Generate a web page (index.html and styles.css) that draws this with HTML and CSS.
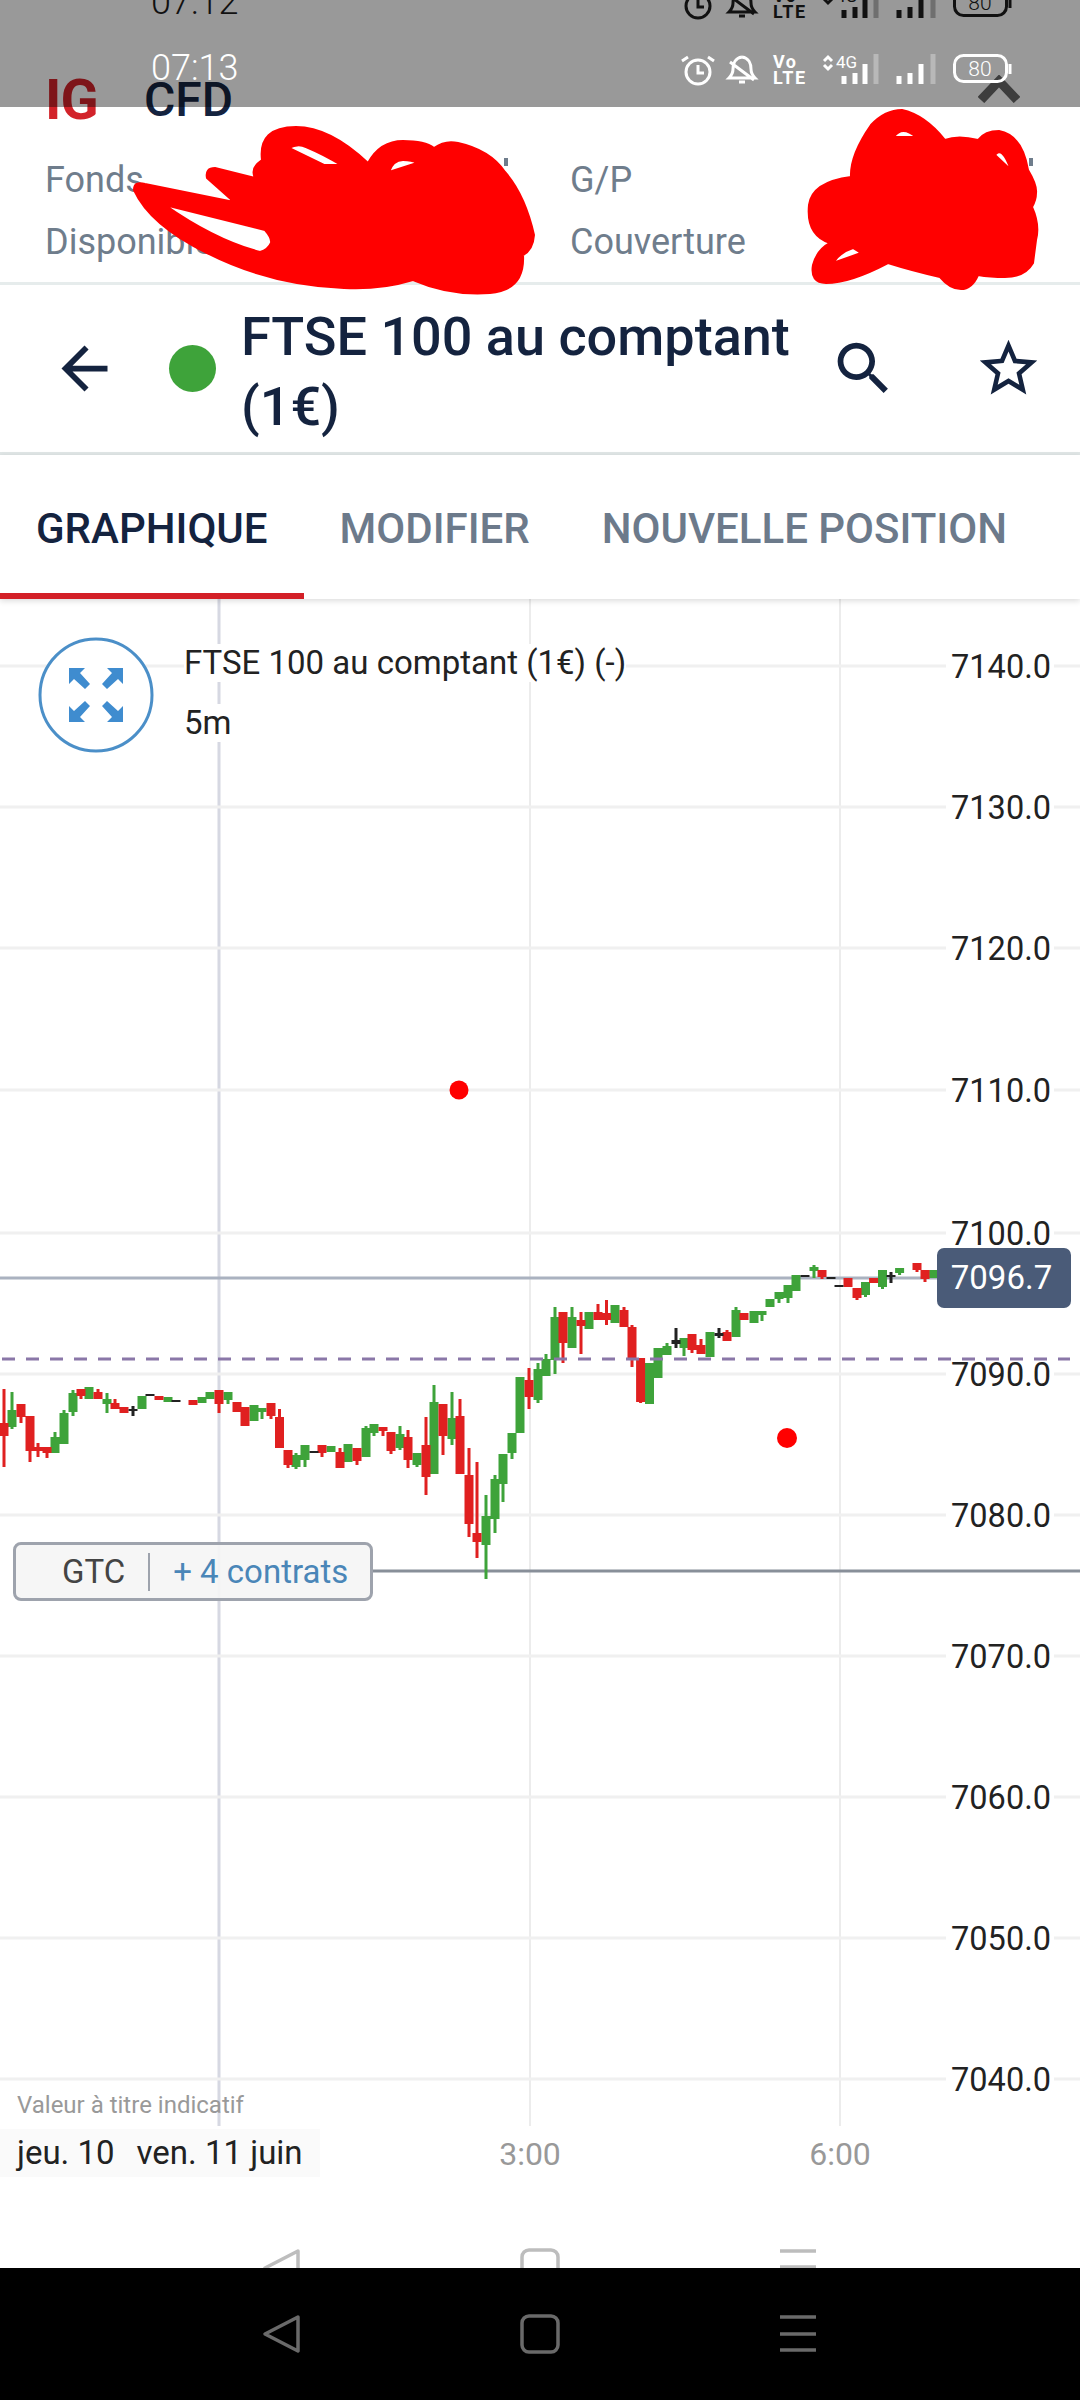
FILE: index.html
```html
<!DOCTYPE html>
<html lang="fr">
<head>
    <meta charset="UTF-8">
    <meta name="viewport" content="width=device-width, initial-scale=1.0">
    <title>IG CFD - FTSE 100 au comptant</title>
    <link rel="stylesheet" href="styles.css">
</head>
<body>
    <div class="app">
        <header class="top-bar">
            <span class="logo">IG</span>
            <span class="brand">CFD</span>
            <svg class="chevron" viewBox="0 0 42 28"><path d="M3 25 21 6l18 19"/></svg>
        </header>

        <section class="account">
            <span>Fonds</span>
            <span>G/P</span>
            <span>Disponible</span>
            <span>Couverture</span>
        </section>

        <section class="instrument">
            <svg class="icon" viewBox="0 0 24 24"><path d="M20 11H7.83l5.59-5.59L12 4l-8 8 8 8 1.41-1.41L7.83 13H20v-2z"/></svg>
            <span class="status-dot"></span>
            <h1 class="instrument-name">FTSE 100 au comptant (1€)</h1>
            <svg class="icon" viewBox="0 0 24 24"><path d="M15.5 14h-.79l-.28-.27C15.41 12.59 16 11.11 16 9.5 16 5.91 13.09 3 9.5 3S3 5.91 3 9.5 5.91 16 9.5 16c1.61 0 3.09-.59 4.23-1.57l.27.28v.79l5 4.99L20.49 19l-4.99-5zm-6 0C7.01 14 5 11.99 5 9.5S7.01 5 9.5 5 14 7.01 14 9.5 11.99 14 9.5 14z"/></svg>
            <svg class="icon star" viewBox="0 0 24 24"><path d="M22 9.24l-7.19-.62L12 2 9.19 8.63 2 9.24l5.46 4.73L5.82 21 12 17.27 18.18 21l-1.63-7.03L22 9.24zM12 15.4l-3.76 2.27 1-4.28-3.32-2.88 4.38-.38L12 6.1l1.71 4.04 4.38.38-3.32 2.88 1 4.28L12 15.4z"/></svg>
        </section>

        <nav class="tabs">
            <a class="tab active">GRAPHIQUE</a>
            <a class="tab">MODIFIER</a>
            <a class="tab">NOUVELLE POSITION</a>
        </nav>

        <main class="chart">
            <!-- viewBox uses screen coordinates, so y values read straight off the screenshot -->
            <svg class="chart-canvas" viewBox="0 599 1080 1669">
                <path class="grid-v" d="M530 599V2126M840 599V2126"/>
                <path class="grid-v-cursor" d="M219 599V2126"/>
                <path class="grid-h" d="M0 666H946M1054 666H1080M0 807H946M1054 807H1080M0 948H946M1054 948H1080M0 1090H946M1054 1090H1080M0 1233H946M1054 1233H1080M0 1374H946M1054 1374H1080M0 1515H946M1054 1515H1080M0 1656H946M1054 1656H1080M0 1797H946M1054 1797H1080M0 1938H946M1054 1938H1080M0 2079H946M1054 2079H1080"/>

                <text class="price" x="1051" y="667">7140.0</text>
                <text class="price" x="1051" y="808">7130.0</text>
                <text class="price" x="1051" y="949">7120.0</text>
                <text class="price" x="1051" y="1091">7110.0</text>
                <text class="price" x="1051" y="1234">7100.0</text>
                <text class="price" x="1051" y="1375">7090.0</text>
                <text class="price" x="1051" y="1516">7080.0</text>
                <text class="price" x="1051" y="1657">7070.0</text>
                <text class="price" x="1051" y="1798">7060.0</text>
                <text class="price" x="1051" y="1939">7050.0</text>
                <text class="price" x="1051" y="2080">7040.0</text>

                <path class="line-price" d="M0 1278H937"/>
                <path class="line-order" d="M373 1571H1080"/>

                <!-- candles: wicks first, then bodies -->
                <path class="wick up" d="M12 1392V1429M55 1432V1437M64 1410V1413M73 1390V1416M107 1393V1413M228 1400V1404M262 1408V1419M296 1453V1469M305 1445V1467M366 1426V1457M374 1424V1436M400 1426V1450M417 1453V1467M434 1385V1474M452 1392V1445M486 1495V1579M495 1475V1533M503 1454V1502M512 1433V1459M538 1363V1403M546 1354V1376M555 1307V1374M572 1307V1348M667 1343V1355M684 1338V1356M736 1307V1337M762 1311V1321M779 1292V1303M788 1285V1303M814 1265V1278M865.5 1282V1297M882.5 1270V1289M899.6 1268V1275"/>
                <path class="wick down" d="M4 1389V1467M21 1404V1423M30 1416V1462M38 1443V1457M47 1447V1458M81 1389V1399M98 1389V1399M115 1399V1409M219 1390V1413M271 1403V1419M279.5 1409V1448M288 1450V1468M322 1445V1457M340 1448V1468M357 1448V1465M383 1427V1436M391 1432V1454M408 1430V1468M426 1417V1495M443 1404V1455M460 1399V1474M469 1448V1537M477 1462V1558M529 1368V1409M563 1312V1363M581 1312V1354M598 1304V1320M606.5 1300V1325M624 1307V1327M632 1325V1367M640.6 1358V1403M692 1334V1353M701 1339V1354M727 1330V1341M822 1270V1279M857 1288V1300M917 1263V1272M925 1270V1282"/>
                <path class="wick doji" d="M133 1406V1416M676 1328V1348M719 1328V1338M891 1272V1283"/>

                <path class="body up" d="M12 1410V1427M55 1437V1453M64 1413V1444M73 1393V1412M89 1387V1399M107 1399V1404M142 1396V1409M168 1397V1402M202 1397V1403M210 1392V1399M228 1392V1400M254 1405V1421M262 1408V1412M296 1455V1467M305 1445V1460M331 1446V1452M348 1444V1462M366 1428V1457M374 1424V1433M400 1434V1448M417 1453V1465M434 1402V1474M452 1418V1439M486 1516V1545M495 1479V1519M503 1454V1484M512 1433V1453M520 1377V1433M538 1369V1400M546 1359V1376M555 1317V1360M572 1317V1348M589 1312V1329M615 1305V1323M649.5 1363V1404M658 1348V1378M667 1346V1355M684 1338V1348M710 1332V1357M736 1310V1337M754 1311V1323M762 1311V1315M770 1299V1307M779 1292V1299M788 1285V1298M796 1275V1291M814 1267V1271M865.5 1282V1295M882.5 1270V1287M899.6 1268V1273M933.6 1270V1278"/>
                <path class="body down" d="M4 1423V1436M21 1404V1417M30 1416V1451M38 1447V1451M47 1447V1453M81 1389V1396M98 1392V1399M115 1403V1409M124 1407V1413M159 1396V1400M193 1400V1405M219 1390V1404M237 1402V1412M245 1407V1426M271 1403V1416M279.5 1417V1448M288 1450V1465M322 1445V1453M340 1452V1468M357 1448V1461M383 1427V1431M391 1432V1451M408 1437V1460M426 1445V1477M443 1404V1436M460 1416V1474M469 1475V1524M477 1533V1542M529 1380V1397M563 1312V1343M581 1320V1326M598 1312V1320M606.5 1313V1320M624 1310V1327M632 1327V1358M640.6 1358V1402M692 1334V1350M701 1345V1354M727 1332V1341M744 1313V1320M822 1270V1277M848 1278V1287M857 1288V1298M873.6 1278V1283M917 1263V1270M925 1270V1279"/>
                <path class="body doji" d="M133 1409V1411M150 1394V1396M176 1400V1402M314 1451V1453M676 1340V1344M719 1333V1336M805 1275V1277M831 1277V1279M839 1285V1287M891 1275V1277"/>

                <path class="line-dashed" d="M2 1359H1070"/>
                <circle class="marker" cx="459" cy="1090" r="9.5"/>
                <circle class="marker" cx="787" cy="1438" r="10"/>

                <text class="time" x="530" y="2154">3:00</text>
                <text class="time" x="840" y="2154">6:00</text>

                <!-- nav bar icons peeking out from under the second screenshot -->
                <g class="nav-ghost">
                    <path d="M298 2251 265 2268l33 17z"/>
                    <rect x="522" y="2250" width="36" height="36" rx="7"/>
                    <path d="M780 2251h36M780 2267h36"/>
                </g>
            </svg>

            <div class="legend">
                <svg class="expand" viewBox="0 0 116 116">
                    <circle class="expand-ring" cx="58" cy="58" r="56"/>
                    <g class="expand-arrows">
                        <path d="M31 31h16l-5 5 10 11-5 5-11-10-5 5z"/>
                        <path d="M85 31H69l5 5-10 11 5 5 11-10 5 5z"/>
                        <path d="M31 85h16l-5-5 10-11-5-5-11 10-5-5z"/>
                        <path d="M85 85H69l5-5-10-11 5-5 11 10 5-5z"/>
                    </g>
                </svg>
                <div class="legend-text">
                    <span>FTSE 100 au comptant (1€) (-)</span>
                    <span>5m</span>
                </div>
            </div>

            <div class="order-tag">
                <span class="order-type">GTC</span>
                <span class="order-size">+ 4 contrats</span>
            </div>

            <div class="price-tag">7096.7</div>

            <p class="disclaimer">Valeur à titre indicatif</p>
            <p class="dates"><span>jeu. 10</span><span>ven. 11 juin</span></p>
        </main>

        <footer class="nav-bar">
            <svg viewBox="0 2268 1080 132">
                <path d="M298 2317 265 2334l33 17z"/>
                <rect x="522" y="2316" width="36" height="36" rx="7"/>
                <path d="M780 2317h36M780 2334h36M780 2350h36"/>
            </svg>
        </footer>

        <!-- red pen marks hiding the account figures -->
        <svg class="scribble" viewBox="0 0 1080 300">
            <path class="peek" d="M506 158v8M1031 158v8"/>
            <path class="blot" fill-rule="evenodd" d="M134 190Q134 181 145 184L234 202 207 178Q205 168 215 168L255 178Q250 168 262 160 258 127 296 127 330 127 368 163 380 141 403 141 425 141 434 148 445 140 458 143 490 150 505 172 525 195 534 235 533 250 523 255 525 290 490 293 450 296 413 280 380 290 344 288 270 285 207 253 150 225 134 190ZM165 205 265 230Q272 238 271 243 268 250 260 252 215 240 165 205ZM289 148Q298 143 306 147 325 155 341 165L324 165ZM389 172Q393 160 403 160 412 160 417 163Z"/>
            <path class="blot" fill-rule="evenodd" d="M902 110Q925 115 945 140 958 135 978 140 985 131 999 131 1022 135 1028 170 1037 185 1036 193 1036 200 1032 207 1040 225 1036 240L1033 263Q1025 277 1005 277 990 277 978 275 972 289 961 289 950 289 940 277 910 270 888 263 850 283 826 283 810 283 813 265 817 250 830 243 806 235 809 205 812 182 851 177 850 155 871 125 885 110 902 110ZM894 137Q902 125 916 137ZM995 155Q1002 145 1011 170ZM833 263Q840 252 853 248L861 253Z"/>
        </svg>

        <div class="scrim">
            <div class="status-row ghost">
                <span class="clock">07:12</span>
                <svg class="status-icons" viewBox="0 0 400 32">
                    <circle class="ico" cx="36" cy="18" r="12"/>
                    <path class="ico" d="M36 11v8h6M26 3l-6 4M46 3l6 4"/>
                    <path class="ico" d="M80 3c-7 1-9 7-9 12 0 5-2 7-4 9h26c-2-2-4-4-4-9 0-5-2-11-9-12M68 8l24 18M77 28h6"/>
                    <text class="net-big" x="111" y="14">Vo</text>
                    <text class="net-big" x="111" y="30">LTE</text>
                    <text class="net-small" x="174" y="14">4G</text>
                    <path class="ico" d="M162 7l4-4 4 4M162 11l4 4 4-4"/>
                    <path class="bar" d="M182 22v8M193 19v11M203 10v20M237 22v8M248 19v11M259 10v20"/>
                    <path class="bar dim" d="M214 0v30M271 0v30"/>
                    <rect class="ico" x="292.500" y="1.500" width="52" height="26" rx="9"/>
                    <path class="ico" d="M348 10v10"/>
                    <text class="batt" x="318" y="22">80</text>
                </svg>
            </div>
            <div class="status-row">
                <span class="clock">07:13</span>
                <svg class="status-icons" viewBox="0 0 400 32">
                    <circle class="ico" cx="36" cy="18" r="12"/>
                    <path class="ico" d="M36 11v8h6M26 3l-6 4M46 3l6 4"/>
                    <path class="ico" d="M80 3c-7 1-9 7-9 12 0 5-2 7-4 9h26c-2-2-4-4-4-9 0-5-2-11-9-12M68 8l24 18M77 28h6"/>
                    <text class="net-big" x="111" y="14">Vo</text>
                    <text class="net-big" x="111" y="30">LTE</text>
                    <text class="net-small" x="174" y="14">4G</text>
                    <path class="ico" d="M162 7l4-4 4 4M162 11l4 4 4-4"/>
                    <path class="bar" d="M182 22v8M193 19v11M203 10v20M237 22v8M248 19v11M259 10v20"/>
                    <path class="bar dim" d="M214 0v30M271 0v30"/>
                    <rect class="ico" x="292.500" y="1.500" width="52" height="26" rx="9"/>
                    <path class="ico" d="M348 10v10"/>
                    <text class="batt" x="318" y="22">80</text>
                </svg>
            </div>
        </div>
    </div>
</body>
</html>
```

FILE: styles.css
```css
* {
    box-sizing: border-box;
}

body {
    margin: 0;
    background: #fff;
    font-family: Roboto, "Liberation Sans", sans-serif;
}

.app {
    position: relative;
    display: flex;
    flex-direction: column;
    width: 1080px;
    height: 2400px;
    overflow: hidden;
}

/* Header */
.top-bar {
    display: flex;
    align-items: center;
    height: 149px;
    padding: 50px 0 0 45px;
}

.logo {
    width: 99px;
    color: #d2232a;
    font-size: 56px;
    font-weight: 700;
    letter-spacing: -1px;
}

.brand {
    color: #14233f;
    font-size: 48px;
    font-weight: 500;
}

.chevron {
    width: 42px;
    height: 28px;
    margin: -21px 0 0 745px;
    fill: none;
    stroke: #666;
    stroke-width: 9;
}

.account {
    display: grid;
    grid-template-columns: 525px 1fr;
    grid-auto-rows: 62px;
    height: 136px;
    padding-left: 45px;
    border-bottom: 3px solid #e6ecec;
    color: #6f7d8c;
    font-size: 36px;
    line-height: 62px;
}

.instrument {
    display: flex;
    align-items: center;
    height: 170px;
    padding: 0 37px 0 50px;
    border-bottom: 3px solid #e0e6e6;
}

.icon {
    flex: none;
    width: 69px;
    height: 69px;
    fill: #14233f;
}

.icon.star {
    margin-left: 76px;
}

.status-dot {
    flex: none;
    width: 47px;
    height: 47px;
    margin-left: 50px;
    border-radius: 50%;
    background: #3ea33a;
}

.instrument-name {
    flex: 1;
    margin: 0 0 0 25px;
    padding-top: 6px;
    color: #14233f;
    font-size: 54px;
    font-weight: 500;
    line-height: 70px;
}

.tabs {
    position: relative;
    z-index: 1;
    display: flex;
    height: 144px;
    background: #fff;
    box-shadow: 0 2px 6px rgba(0, 0, 0, 0.14);
}

.tab {
    padding: 47px 36px 0;
    border-bottom: 6px solid transparent;
    color: #6c7a8b;
    font-size: 42px;
    font-weight: 500;
    line-height: 54px;
}

.tab.active {
    border-bottom-color: #d32027;
    color: #14233f;
}

/* Chart */
.chart {
    position: relative;
    flex: 1;
    overflow: hidden;
}

.chart-canvas {
    position: absolute;
    inset: 0;
    width: 1080px;
    height: 1669px;
}

.grid-v {
    stroke: #ececec;
    stroke-width: 2;
}

.grid-v-cursor {
    stroke: #d6d8e2;
    stroke-width: 3;
}

.grid-h {
    stroke: #f0f0f0;
    stroke-width: 3;
}

.price {
    fill: #222;
    font-size: 32.5px;
    text-anchor: end;
    dominant-baseline: central;
}

.time {
    fill: #999;
    font-size: 32px;
    text-anchor: middle;
    dominant-baseline: central;
}

.line-price {
    stroke: #aab2c0;
    stroke-width: 3;
}

.line-order {
    stroke: #888f99;
    stroke-width: 3;
}

.line-dashed {
    fill: none;
    stroke: #8a77a8;
    stroke-width: 3;
    stroke-dasharray: 13 11;
}

.wick {
    stroke-width: 3;
}

.body {
    stroke-width: 9;
}

.up {
    stroke: #3ea33a;
}

.down {
    stroke: #e02020;
}

.doji {
    stroke: #222;
}

.marker {
    fill: #f00;
}

.nav-ghost {
    fill: none;
    stroke: #bdbdbd;
    stroke-width: 3.5;
    stroke-linejoin: round;
}

.legend {
    position: absolute;
    top: 38px;
    left: 38px;
    display: flex;
    gap: 30px;
}

.expand {
    width: 116px;
    height: 116px;
    flex: none;
}

.expand-ring {
    fill: #fff;
    stroke: #4b8fc8;
    stroke-width: 3;
}

.expand-arrows {
    fill: #3f8ccf;
}

.legend-text {
    display: flex;
    flex-direction: column;
    align-items: flex-start;
    gap: 22px;
    margin-top: 7px;
    color: #222;
    font-size: 33px;
    line-height: 38px;
}

.legend-text span {
    background: #fff;
}

.order-tag {
    position: absolute;
    top: 943px;
    left: 13px;
    display: flex;
    align-items: center;
    width: 360px;
    height: 59px;
    padding-left: 46px;
    border: 3px solid #9ea3ad;
    border-radius: 8px;
    background: rgba(245, 245, 245, 0.92);
    font-size: 33px;
}

.order-type {
    padding-right: 23px;
    border-right: 2px solid #9ea3ad;
    color: #444;
    line-height: 38px;
}

.order-size {
    padding-left: 23px;
    color: #4a86b8;
}

.price-tag {
    position: absolute;
    top: 649px;
    left: 937px;
    width: 134px;
    height: 60px;
    padding-right: 5px;
    border-radius: 7px;
    background: #4a5b78;
    color: #fff;
    font-size: 33px;
    line-height: 60px;
    text-align: center;
}

.disclaimer {
    position: absolute;
    top: 1490px;
    left: 17px;
    margin: 0;
    color: #999;
    font-size: 24px;
    line-height: 32px;
}

.dates {
    position: absolute;
    top: 1530px;
    left: 0;
    display: flex;
    gap: 22px;
    width: 320px;
    margin: 0;
    padding-left: 17px;
    background: #fafafa;
    color: #222;
    font-size: 33px;
    line-height: 48px;
}

/* System bars */
.nav-bar {
    height: 132px;
    background: #000;
}

.nav-bar svg {
    display: block;
    width: 1080px;
    height: 132px;
    fill: none;
    stroke: #6a6a6a;
    stroke-width: 3.5;
    stroke-linejoin: round;
}

.scribble {
    position: absolute;
    top: 0;
    left: 0;
    width: 1080px;
    height: 300px;
}

.peek {
    stroke: #6f7d8c;
    stroke-width: 4;
}

.blot {
    fill: #f00;
    stroke: #f00;
    stroke-width: 2;
    stroke-linejoin: round;
}

.scrim {
    position: absolute;
    top: 0;
    left: 0;
    width: 1080px;
    height: 107px;
    overflow: hidden;
    background: rgba(0, 0, 0, 0.4);
}

.status-row {
    display: flex;
    align-items: center;
    height: 56px;
    margin-bottom: 10px;
    padding-left: 151px;
    color: #fff;
}

.status-row.ghost {
    margin-top: -26px;
    color: #111;
}

.clock {
    width: 511px;
    font-size: 36px;
    font-weight: 300;
}

.status-icons {
    flex: none;
    width: 400px;
    height: 32px;
    margin-top: 3px;
    fill: currentColor;
}

.ico {
    fill: none;
    stroke: currentColor;
    stroke-width: 3;
}

.net-big {
    font-size: 18px;
    font-weight: 700;
    letter-spacing: 1.5px;
}

.net-small {
    font-size: 17px;
}

.bar {
    stroke: currentColor;
    stroke-width: 5;
}

.bar.dim {
    opacity: 0.3;
}

.batt {
    font-size: 21px;
    font-weight: 300;
    text-anchor: middle;
}
```
